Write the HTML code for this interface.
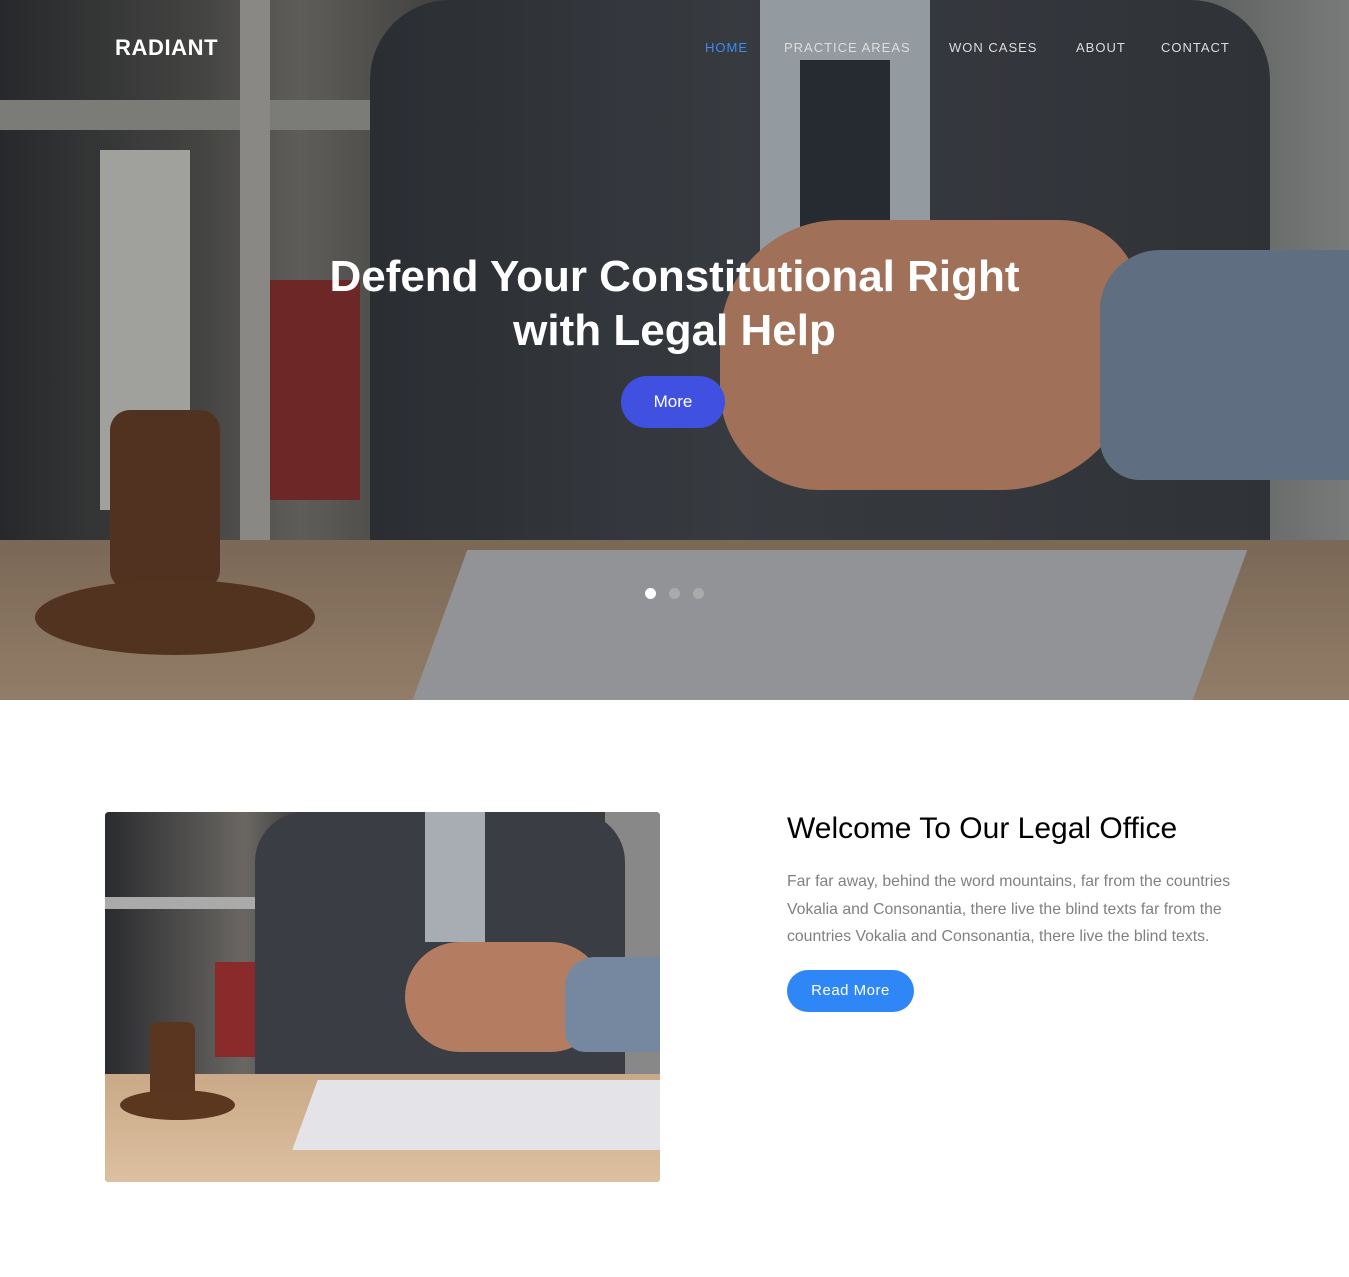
<!DOCTYPE html>
<html><head><meta charset="utf-8"><style>
*{margin:0;padding:0;box-sizing:border-box}
body{width:1349px;height:1277px;background:#fff;font-family:"Liberation Sans",sans-serif;overflow:hidden;position:relative}
.hero{position:absolute;left:0;top:0;width:1349px;height:700px;overflow:hidden;background:#3a3c40}
.hero div{position:absolute}
.logo{position:absolute;left:115px;top:35px;color:#fff;font-weight:bold;font-size:22px;letter-spacing:.6px;z-index:5}
.nav{position:absolute;top:40px;z-index:5;font-size:13px;letter-spacing:1px;color:#ddd}
h1{position:absolute;top:250px;left:0;width:1349px;text-align:center;color:#fff;font-size:44px;line-height:54px;font-weight:bold;z-index:5}
.more{position:absolute;left:621px;top:376px;width:104px;height:52px;border-radius:26px;background:#4050e0;color:#fff;font-size:17px;text-align:center;line-height:52px;z-index:5}
.dot{position:absolute;top:588px;width:11px;height:11px;border-radius:50%;background:#aaa;z-index:5}
.photo{position:absolute;left:105px;top:812px;width:555px;height:370px;border-radius:4px;overflow:hidden;background:#3a3c40}
.photo div{position:absolute}
</style></head><body>
<div class="hero">
 <div style="left:0;top:0;width:500px;height:560px;background:linear-gradient(90deg,#2a2b2e,#4b4a48 40%,#6a6763 60%,#3a3a3a)"></div>
 <div style="left:0;top:100px;width:480px;height:30px;background:#8a8985"></div>
 <div style="left:240px;top:0;width:30px;height:560px;background:#9a9893"></div>
 <div style="left:270px;top:280px;width:90px;height:220px;background:#7a2a2a"></div>
 <div style="left:100px;top:150px;width:90px;height:360px;background:#b4b3b0"></div>
 <div style="left:1180px;top:0;width:169px;height:560px;background:linear-gradient(90deg,#666,#888)"></div>
 <div style="left:370px;top:0;width:900px;height:560px;background:linear-gradient(90deg,#2e3136,#3d4046 40%,#34373c);border-radius:80px 80px 0 0"></div>
 <div style="left:760px;top:0;width:170px;height:260px;background:#a7adb3"></div>
 <div style="left:800px;top:60px;width:90px;height:200px;background:#2a2e36"></div>
 <div style="left:720px;top:220px;width:420px;height:270px;background:#b47d62;border-radius:120px 80px 140px 100px"></div>
 <div style="left:1100px;top:250px;width:249px;height:230px;background:#6a7a90;border-radius:60px 0 0 40px"></div>
 <div style="left:0;top:540px;width:1349px;height:160px;background:linear-gradient(180deg,#8a735f,#a48b73)"></div>
 <div style="left:440px;top:550px;width:780px;height:150px;background:#a3a4a8;transform:skewX(-20deg)"></div>
 <div style="left:110px;top:410px;width:110px;height:180px;background:#5a3520;border-radius:20px"></div>
 <div style="left:35px;top:580px;width:280px;height:75px;background:#5b3720;border-radius:50%"></div>
 <div style="left:0;top:0;width:1349px;height:700px;background:rgba(20,22,28,.12)"></div>
</div>
<div class="logo">RADIANT</div>
<div class="nav" style="left:705px;color:#3b8cf0">HOME</div>
<div class="nav" style="left:784px">PRACTICE AREAS</div>
<div class="nav" style="left:949px">WON CASES</div>
<div class="nav" style="left:1076px">ABOUT</div>
<div class="nav" style="left:1161px">CONTACT</div>
<h1>Defend Your Constitutional Right<br>with Legal Help</h1>
<div class="more">More</div>
<div class="dot" style="left:645px;background:#fff"></div>
<div class="dot" style="left:669px"></div>
<div class="dot" style="left:693px"></div>

<div class="photo">
 <div style="left:0;top:0;width:200px;height:270px;background:linear-gradient(90deg,#2a2b2e,#6a6763 70%,#3a3a3a)"></div>
 <div style="left:0;top:85px;width:200px;height:12px;background:#aaa"></div>
 <div style="left:110px;top:150px;width:45px;height:95px;background:#8a2a2a"></div>
 <div style="left:500px;top:0;width:55px;height:270px;background:#888"></div>
 <div style="left:150px;top:0;width:370px;height:270px;background:#3a3d43;border-radius:50px 50px 0 0"></div>
 <div style="left:320px;top:0;width:60px;height:130px;background:#a7adb3"></div>
 <div style="left:300px;top:130px;width:200px;height:110px;background:#b47d62;border-radius:60px"></div>
 <div style="left:460px;top:145px;width:95px;height:95px;background:#7588a0;border-radius:30px 0 0 20px"></div>
 <div style="left:0;top:262px;width:555px;height:108px;background:linear-gradient(180deg,#c9a987,#dcc0a0)"></div>
 <div style="left:200px;top:268px;width:390px;height:70px;background:#e4e4e8;transform:skewX(-20deg)"></div>
 <div style="left:45px;top:210px;width:45px;height:80px;background:#5a3520;border-radius:8px"></div>
 <div style="left:15px;top:278px;width:115px;height:30px;background:#5b3720;border-radius:50%"></div>
</div>

<div style="position:absolute;left:787px;top:812px;font-size:30px;color:#000">Welcome To Our Legal Office</div>
<div style="position:absolute;left:787px;top:868px;width:470px;font-size:15.8px;line-height:27.5px;color:#808080">Far far away, behind the word mountains, far from the countries Vokalia and Consonantia, there live the blind texts far from the countries Vokalia and Consonantia, there live the blind texts.</div>
<div style="position:absolute;left:787px;top:970px;width:127px;height:42px;border-radius:21px;background:#2f86f6;color:#fff;font-size:15px;text-align:center;line-height:42px;letter-spacing:.5px">Read More</div>
</body></html>
